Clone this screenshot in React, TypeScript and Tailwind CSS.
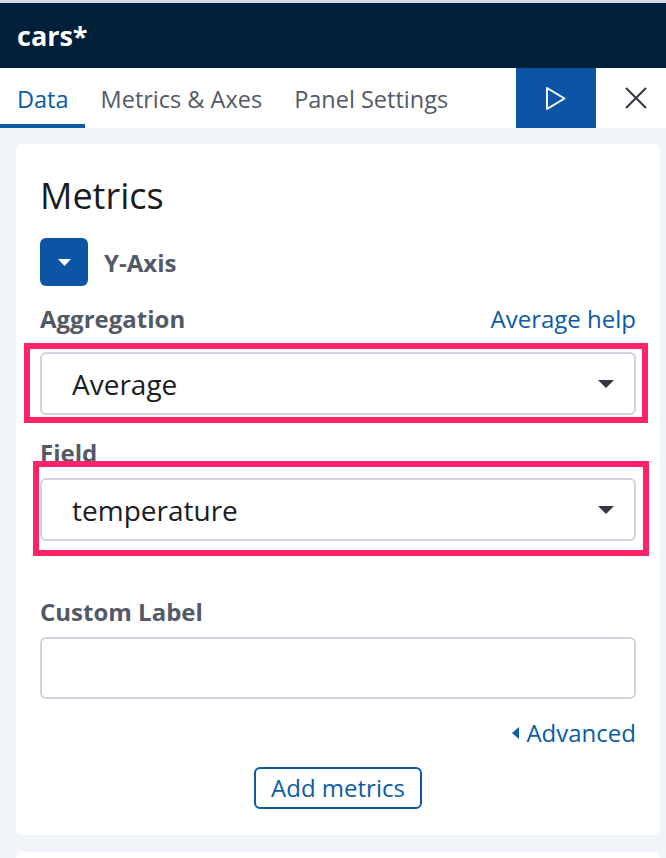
import React from "react";

function Caret({ className }: { className?: string }) {
  return (
    <svg width="16" height="8" viewBox="0 0 16 8" className={className}>
      <path d="M0 0 L16 0 L8 8 Z" fill="#343741" />
    </svg>
  );
}

function SelectBox({ value }: { value: string }) {
  return (
    <div className="flex h-[63px] w-full items-center justify-between rounded-[6px] border-2 border-[#cdd4e0] bg-white pl-[30px] pr-[20px]">
      <span className="text-[28px] leading-[36px] text-[#1a1c21]">{value}</span>
      <Caret />
    </div>
  );
}

function Label({ children }: { children: React.ReactNode }) {
  return <div className="text-[24px] font-bold leading-[32px] text-[#535966]">{children}</div>;
}

export default function App() {
  return (
    <div className="h-[858px] w-[666px] overflow-hidden bg-[#f1f4f9] font-['Open_Sans',sans-serif]">
      {/* header */}
      <div className="flex h-[68px] items-center border-t-[3px] border-[#d3dae6] bg-[#00203a] pl-[17px]">
        <span className="text-[27px] font-bold leading-[36px] text-white">cars*</span>
      </div>
      {/* tabs */}
      <div className="flex h-[60px] bg-white">
        <div className="flex h-full items-center border-b-4 border-[#0b5ba6] pl-[17px] pr-[16px] pt-[6px] text-[23.5px] leading-[32px] text-[#0b5ba6]">
          Data
        </div>
        <div className="flex h-full items-center border-b-4 border-transparent px-[16px] pt-[6px] text-[23.5px] leading-[32px] text-[#535966]">
          Metrics &amp; Axes
        </div>
        <div className="flex h-full items-center border-b-4 border-transparent px-[16px] pt-[6px] text-[23.5px] leading-[32px] text-[#535966]">
          Panel Settings
        </div>
        <div className="flex-1" />
        <div className="flex h-full w-[80px] items-center justify-center bg-[#0b55a4]">
          <svg width="22" height="25" viewBox="0 0 22 25">
            <path d="M2 2 L19.5 12.5 L2 23 Z" fill="none" stroke="white" strokeWidth="2" strokeLinejoin="round" />
          </svg>
        </div>
        <div className="flex h-full w-[70px] items-center justify-center pl-[10px]">
          <svg width="22" height="22" viewBox="0 0 22 22">
            <path d="M1 1 L21 21 M21 1 L1 21" stroke="#343741" strokeWidth="2" />
          </svg>
        </div>
      </div>
      {/* body */}
      <div className="flex flex-col gap-[17px] pl-[16px] pt-[16px]">
        <div className="relative flex w-[644px] flex-col rounded-[6px] bg-white px-[24px] pb-[26px] pt-[30px]">
          <div className="text-[36px] leading-[44px] text-[#1a1c21]">Metrics</div>
          <div className="mt-[20px] flex h-[48px] items-center gap-[16px]">
            <div className="flex h-[48px] w-[48px] items-center justify-center rounded-[6px] bg-[#0b55a4]">
              <svg width="13" height="7" viewBox="0 0 13 7">
                <path d="M0 0 L13 0 L6.5 7 Z" fill="white" />
              </svg>
            </div>
            <span className="pt-[2px] text-[24px] font-bold leading-[32px] text-[#535966]">Y-Axis</span>
          </div>
          <div className="mt-[17px] flex items-center justify-between">
            <Label>Aggregation</Label>
            <span className="text-[24px] leading-[32px] text-[#0b5ba6]">Average help</span>
          </div>
          <div className="mt-[17px]">
            <SelectBox value="Average" />
          </div>
          <div className="mt-[22px]">
            <Label>Field</Label>
          </div>
          <div className="mt-[9px]">
            <SelectBox value="temperature" />
          </div>
          <div className="mt-[55px]">
            <Label>Custom Label</Label>
          </div>
          <div className="mt-[9px] h-[62px] w-full rounded-[6px] border-2 border-[#cdd4e0] bg-white" />
          <div className="mt-[18px] flex items-center justify-end gap-[7px] text-[24px] leading-[32px] text-[#0b5ba6]">
            <svg width="7" height="12" viewBox="0 0 7 12">
              <path d="M7 0 L7 12 L0 6 Z" fill="#0b5ba6" />
            </svg>
            <span>Advanced</span>
          </div>
          <div className="mt-[18px] flex justify-center">
            <div className="flex h-[42px] items-center rounded-[6px] border-2 border-[#0b5ba6] px-[15px] text-[24px] leading-[32px] text-[#0b5ba6]">
              Add metrics
            </div>
          </div>
          {/* annotation boxes */}
          <div className="pointer-events-none absolute left-[8px] top-[199px] h-[80px] w-[624px] border-[6px] border-[#ff2468]" />
          <div className="pointer-events-none absolute left-[17px] top-[317px] h-[95px] w-[616px] border-[6px] border-[#ff2468]" />
        </div>
        <div className="h-[120px] w-[644px] rounded-[6px] bg-white" />
      </div>
    </div>
  );
}
